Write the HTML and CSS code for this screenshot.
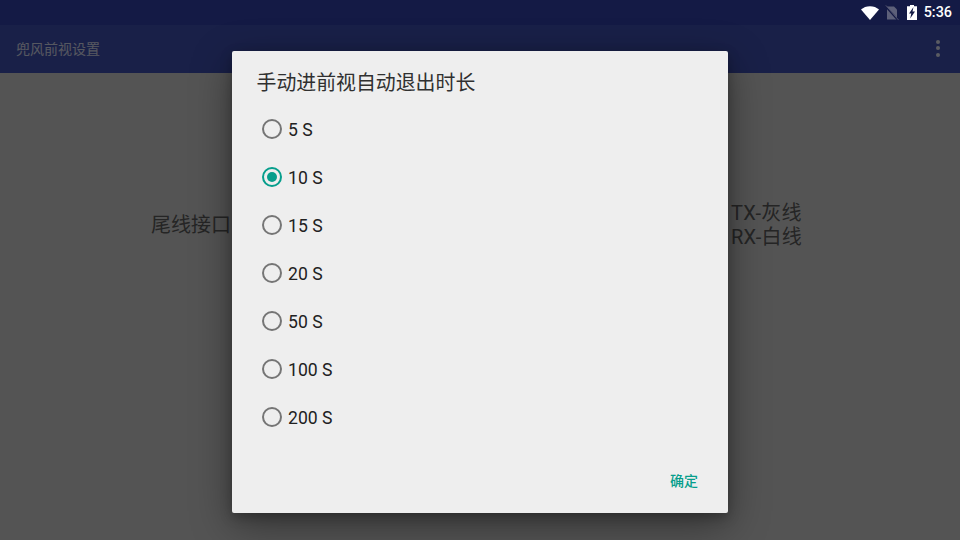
FILE: index.html
```html
<!DOCTYPE html>
<html lang="zh-CN">
<head>
<meta charset="utf-8">
<title>兜风前视设置</title>
<link rel="stylesheet" href="styles.css">
</head>
<body>
<div class="screen">
  <div class="statusbar">
    <svg class="ic-wifi" viewBox="0 0 18 14" width="18" height="14"><path d="M0 3.6C2.4 1.5 5.5.3 9 .3s6.600 1.200 9 3.300L9 14z" fill="#fff"/></svg>
    <svg class="ic-sim" viewBox="0 0 14 16" width="14" height="16"><path d="M2 1.500h7l3 3v10H2z" fill="#5d6079"/><path d="M.2 .9l13 14.500" stroke="#141a45" stroke-width="1.800"/><path d="M.8 .3l12.800 14.800" stroke="#5d6079" stroke-width=".8"/></svg>
    <svg class="ic-bat" viewBox="0 0 10 15" width="10" height="15"><path d="M3 0h4v1.200h3V15H0V1.200h3z" fill="#fff"/><path d="M6.500 2L2 8.500h2.300L3.200 13.500 8 6.500H5.500z" fill="#141a45"/></svg>
    <span class="clock">5:36</span>
  </div>
  <div class="appbar">
    <span class="appbar-title">兜风前视设置</span>
    <div class="overflow"><i></i><i></i><i></i></div>
  </div>
  <div class="content">
    <div class="wiring">
      <div>尾线接口</div>
      <div class="wires"><div>TX-灰线</div><div>RX-白线</div></div>
    </div>
  </div>
  <div class="scrim"></div>
  <div class="dialog">
    <h1 class="dialog-title">手动进前视自动退出时长</h1>
    <ul class="options">
      <li class="option"><span class="radio"></span><span class="label">5 S</span></li>
      <li class="option checked"><span class="radio"></span><span class="label">10 S</span></li>
      <li class="option"><span class="radio"></span><span class="label">15 S</span></li>
      <li class="option"><span class="radio"></span><span class="label">20 S</span></li>
      <li class="option"><span class="radio"></span><span class="label">50 S</span></li>
      <li class="option"><span class="radio"></span><span class="label">100 S</span></li>
      <li class="option"><span class="radio"></span><span class="label">200 S</span></li>
    </ul>
    <div class="actions"><span class="btn">确定</span></div>
  </div>
</div>
</body>
</html>
```
FILE: styles.css
```css
* { box-sizing: border-box; }
html, body { margin: 0; padding: 0; }
body {
  font-family: Roboto, "Noto Sans CJK SC", sans-serif;
  background: #fff;
}
.screen {
  position: relative;
  width: 960px;
  height: 540px;
  overflow: hidden;
  display: flex;
  flex-direction: column;
  background: #fff;
}
.statusbar {
  position: relative;
  z-index: 2;
  height: 25px;
  flex: none;
  background: #141a45;
  display: flex;
  align-items: center;
  justify-content: flex-end;
  padding-right: 8px;
}
.ic-wifi { margin-right: 6px; }
.ic-sim { margin-right: 8px; }
.ic-bat { margin-right: 7px; }
.clock { color: #fff; font-size: 14.400px; font-weight: 500; }
.appbar {
  height: 48px;
  flex: none;
  background: #3f51b5;
  display: flex;
  align-items: center;
  justify-content: space-between;
  padding: 0 20px 2px 16px;
}
.appbar-title { color: #fff; font-size: 14px; opacity: .8; margin-bottom: 1px; }
.overflow { display: flex; flex-direction: column; gap: 2.500px; }
.overflow i { width: 4px; height: 4px; border-radius: 50%; background: #fff; opacity: .85; }
.content { flex: 1; padding-top: 127px; background: #d2d2d2; }
.wiring {
  display: flex;
  justify-content: space-between;
  align-items: center;
  padding: 0 158px 0 151px;
  font-size: 20px;
  line-height: 24px;
  color: #5c5c5c;
}
.wires { letter-spacing: .2px; padding-top: 1px; }
.scrim { position: absolute; inset: 0; background: rgba(0, 0, 0, .6); z-index: 1; }
.dialog {
  position: absolute;
  z-index: 3;
  left: 232px;
  top: 51px;
  width: 496px;
  height: 462px;
  background: #eeeeee;
  border-radius: 2px;
  box-shadow: 0 12px 40px rgba(0, 0, 0, .4), 0 4px 12px rgba(0, 0, 0, .25);
  display: flex;
  flex-direction: column;
}
.dialog-title {
  margin: 0;
  padding: 19px 24px 0 24.500px;
  font-size: 19.900px;
  line-height: 28px;
  font-weight: 400;
  color: #303030;
}
.options { list-style: none; margin: 0; padding: 7px 0 0 30px; }
.option {
  height: 48px;
  display: flex;
  align-items: center;
  gap: 6px;
  font-size: 17.600px;
  color: #212121;
}
.label { padding-top: 2px; }
.radio {
  width: 20px;
  height: 20px;
  border: 2px solid #757575;
  border-radius: 50%;
  display: flex;
  align-items: center;
  justify-content: center;
}
.checked .radio { border-color: #069e8c; }
.checked .radio::after {
  content: "";
  width: 10px;
  height: 10px;
  border-radius: 50%;
  background: #069e8c;
}
.actions { margin-top: auto; display: flex; justify-content: flex-end; padding: 0 30px 22px 0; }
.btn { color: #069e8c; font-size: 14px; line-height: 20px; font-weight: 500; }
```
